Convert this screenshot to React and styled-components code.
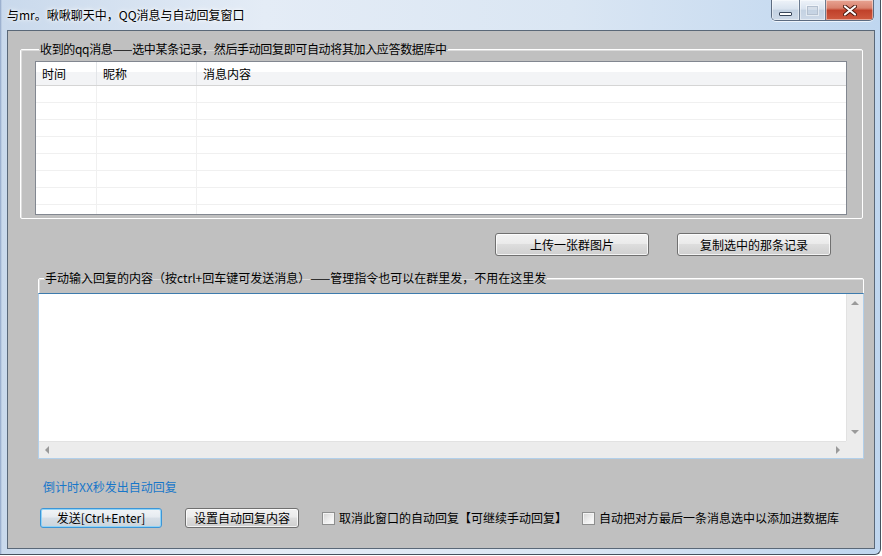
import React from "react"
import styled, { createGlobalStyle } from "styled-components"

const GlobalStyle = createGlobalStyle`
  html, body {
    margin: 0;
    padding: 0;
    background: #ffffff;
  }
  body {
    width: 882px;
    height: 556px;
    overflow: hidden;
    font-family: "Noto Sans CJK SC", "Liberation Sans", sans-serif;
    font-size: 12px;
    color: #000;
  }
`

const FONT = `"Noto Sans CJK SC", "Liberation Sans", sans-serif`

const Window = styled.div`
  box-sizing: border-box;
  width: 881px;
  height: 555px;
  display: flex;
  flex-direction: column;
  padding: 0 5px 5px 7px;
  border-right: 1px solid #46525f;
  border-bottom: 1px solid #46525f;
  border-bottom-right-radius: 6px;
  background:
    linear-gradient(to right, #8ea4c6 0, #c9d9ec 2px, #e4ecf6 30%, #dae6f3 65%, #bfd6ef 100%);
`

const TitleBar = styled.div`
  height: 30px;
  display: flex;
  align-items: flex-start;
  justify-content: space-between;
`

const TitleText = styled.div`
  margin-top: 7px;
  font-size: 12px;
  line-height: 16px;
  color: #000;
  text-shadow: 0 0 6px #fff, 0 0 3px #fff;
`

const CaptionButtons = styled.div`
  display: flex;
  height: 20px;
  margin-right: 1px;
  border: 1px solid #5c6b80;
  border-top: none;
  border-radius: 0 0 5px 5px;
  overflow: hidden;
  box-shadow: 0 1px 0 rgba(255, 255, 255, 0.7);
`

const CaptionButton = styled.div`
  width: ${(p) => p.$w}px;
  height: 100%;
  display: flex;
  align-items: center;
  justify-content: center;
  border-left: ${(p) => (p.$first ? "none" : "1px solid #6b7b90")};
  background: ${(p) =>
    p.$close
      ? "linear-gradient(#e8a493 0%, #d9826e 40%, #c0412a 52%, #cf5a3f 100%)"
      : "linear-gradient(#eef3f9 0%, #d9e3ef 45%, #c4d2e2 52%, #cdd9e8 100%)"};
  box-shadow: inset 0 0 0 1px rgba(255, 255, 255, 0.45);
`

const MinGlyph = styled.div`
  width: 11px;
  height: 2px;
  margin-top: 7px;
  background: #fff;
  border: 1px solid #38465a;
  border-radius: 1px;
`

const MaxGlyph = styled.div`
  width: 9px;
  height: 7px;
  border: 1px solid #b4c0cf;
  box-shadow: inset 0 2px 0 #d6dee8, 0 0 0 1px rgba(255, 255, 255, 0.5);
  background: transparent;
`

const Client = styled.div`
  flex: 1;
  display: flex;
  flex-direction: column;
  border: 1px solid #5a6878;
  background: #c0c0c0;
`

const Group = styled.fieldset`
  margin: ${(p) => p.$margin};
  padding: ${(p) => p.$padding};
  border: 1px solid #fff;
  border-radius: 2px;
  box-shadow: inset 1px 1px 0 #dcdcdc;
  min-width: 0;
`

const Legend = styled.legend`
  margin-left: ${(p) => p.$offset}px;
  padding: 0 1px;
  font-size: 12px;
  line-height: 14px;
  letter-spacing: ${(p) => p.$spacing || 0}px;
  color: #000;
`

const ListView = styled.div`
  margin-top: ${(p) => p.$top}px;
  height: 154px;
  box-sizing: border-box;
  border: 1px solid #828790;
  background: #fff;
  overflow: hidden;
`

const GridRow = styled.div`
  display: grid;
  grid-template-columns: 61px 100px 1fr;
  height: ${(p) => (p.$header ? 24 : 17)}px;
  box-sizing: border-box;
  border-bottom: 1px solid ${(p) => (p.$header ? "#d5d5d5" : "#f0f0f0")};
  background: ${(p) =>
    p.$header ? "linear-gradient(#ffffff 0%, #ffffff 42%, #f3f4f6 42%, #f3f4f6 100%)" : "#fff"};
`

const Cell = styled.div`
  border-right: 1px solid ${(p) => (p.$header ? "#e3e5e8" : "#f0f0f0")};
  padding-left: 6px;
  line-height: 23px;
  font-size: 12px;
  &:last-child {
    border-right: none;
  }
`

const ButtonRow = styled.div`
  display: flex;
  justify-content: flex-end;
  gap: 28px;
  margin: 14px 43px 0 0;
`

const Button = styled.button`
  box-sizing: border-box;
  width: ${(p) => p.$w}px;
  height: ${(p) => p.$h}px;
  margin-left: ${(p) => p.$ml || 0}px;
  padding: 0;
  font-family: ${FONT};
  font-size: 12px;
  line-height: 1;
  color: #000;
  border-radius: 3px;
  border: 1px solid ${(p) => (p.$default ? "#3d95d6" : "#707070")};
  background: ${(p) =>
    p.$default
      ? "linear-gradient(#f1f4f7 0%, #e6ebf0 45%, #d6dee6 50%, #cbd4dc 100%)"
      : "linear-gradient(#f2f2f2 0%, #ebebeb 45%, #dddddd 50%, #cfcfcf 100%)"};
  box-shadow: ${(p) =>
    p.$default ? "inset 0 0 0 1px #8ed3f7" : "inset 0 0 0 1px rgba(255,255,255,0.75)"};
`

const EditBox = styled.div`
  margin: ${(p) => p.$top}px -1px -1px -1px;
  height: 166px;
  box-sizing: border-box;
  display: grid;
  grid-template-columns: 1fr 17px;
  grid-template-rows: 1fr 17px;
  border: 1px solid #b2cfe9;
  border-top-color: #3d7bad;
  background: #fff;
`

const ScrollBar = styled.div`
  display: flex;
  flex-direction: ${(p) => (p.$vertical ? "column" : "row")};
  justify-content: space-between;
  align-items: center;
  background: #ececec;
  border-${(p) => (p.$vertical ? "left" : "top")}: 1px solid #e2e2e2;
  padding: ${(p) => (p.$vertical ? "7px 0 7px" : "0 6px")};
`

const Corner = styled.div`
  background: #ececec;
`

const Arrow = styled.span`
  width: 0;
  height: 0;
  border: 4px solid transparent;
  ${(p) =>
    p.$dir === "up"
      ? "border-bottom-color:#9a9a9a; border-top-width:0;"
      : p.$dir === "down"
      ? "border-top-color:#9a9a9a; border-bottom-width:0;"
      : p.$dir === "left"
      ? "border-right-color:#9a9a9a; border-left-width:0;"
      : "border-left-color:#9a9a9a; border-right-width:0;"}
`

const Countdown = styled.div`
  margin: 21px 0 0 35px;
  font-size: 12px;
  line-height: 14px;
  color: #1877c9;
`

const BottomRow = styled.div`
  display: flex;
  align-items: center;
  margin: 14px 0 0 32px;
`

const CheckLabel = styled.label`
  display: flex;
  align-items: center;
  gap: 4px;
  font-size: 12px;
  line-height: 14px;
  color: #000;
  margin-left: ${(p) => p.$ml || 0}px;
`

const Box = styled.span`
  box-sizing: border-box;
  width: 13px;
  height: 13px;
  border: 1px solid #8e8f8f;
  background: linear-gradient(135deg, #d2d2d2 0%, #eeeeee 55%, #ffffff 100%);
  box-shadow: inset 0 0 0 1px #f4f4f4;
`

const CloseIcon = () => (
  <svg width="14" height="11" viewBox="0 0 14 11">
    <path d="M2 1.5 L12 9.5 M12 1.5 L2 9.5" stroke="#4a1a10" strokeWidth="4" strokeLinecap="round" />
    <path d="M2 1.5 L12 9.5 M12 1.5 L2 9.5" stroke="#ffffff" strokeWidth="2.2" strokeLinecap="round" />
  </svg>
)

const rows = Array.from({ length: 8 })

const App = () => {
  return (
    <>
      <GlobalStyle />
      <Window>
        <TitleBar>
          <TitleText>与mr。啾啾聊天中，QQ消息与自动回复窗口</TitleText>
          <CaptionButtons>
            <CaptionButton $w={27} $first>
              <MinGlyph />
            </CaptionButton>
            <CaptionButton $w={25}>
              <MaxGlyph />
            </CaptionButton>
            <CaptionButton $w={47} $close>
              <CloseIcon />
            </CaptionButton>
          </CaptionButtons>
        </TitleBar>
        <Client>
          <Group $margin="11px 11px 0 12px" $padding="0 15px 3px 14px">
            <Legend $offset={4} $spacing={-0.35}>
              收到的qq消息——选中某条记录，然后手动回复即可自动将其加入应答数据库中
            </Legend>
            <ListView $top={5}>
              <GridRow $header>
                <Cell $header>时间</Cell>
                <Cell $header>昵称</Cell>
                <Cell $header>消息内容</Cell>
              </GridRow>
              {rows.map((_, i) => (
                <GridRow key={i}>
                  <Cell />
                  <Cell />
                  <Cell />
                </GridRow>
              ))}
            </ListView>
          </Group>

          <ButtonRow>
            <Button $w={154} $h={23}>上传一张群图片</Button>
            <Button $w={154} $h={23}>复制选中的那条记录</Button>
          </ButtonRow>

          <Group $margin="15px 10px 0 30px" $padding="0">
            <Legend $offset={5}>
              手动输入回复的内容（按ctrl+回车键可发送消息）——管理指令也可以在群里发，不用在这里发
            </Legend>
            <EditBox $top={8}>
              <div />
              <ScrollBar $vertical>
                <Arrow $dir="up" />
                <Arrow $dir="down" />
              </ScrollBar>
              <ScrollBar>
                <Arrow $dir="left" />
                <Arrow $dir="right" />
              </ScrollBar>
              <Corner />
            </EditBox>
          </Group>

          <Countdown>倒计时XX秒发出自动回复</Countdown>

          <BottomRow>
            <Button $w={122} $h={20} $default>发送[Ctrl+Enter]</Button>
            <Button $w={114} $h={20} $ml={23}>设置自动回复内容</Button>
            <CheckLabel $ml={23}>
              <Box />
              取消此窗口的自动回复【可继续手动回复】
            </CheckLabel>
            <CheckLabel $ml={15}>
              <Box />
              自动把对方最后一条消息选中以添加进数据库
            </CheckLabel>
          </BottomRow>
        </Client>
      </Window>
    </>
  )
}

export default App
